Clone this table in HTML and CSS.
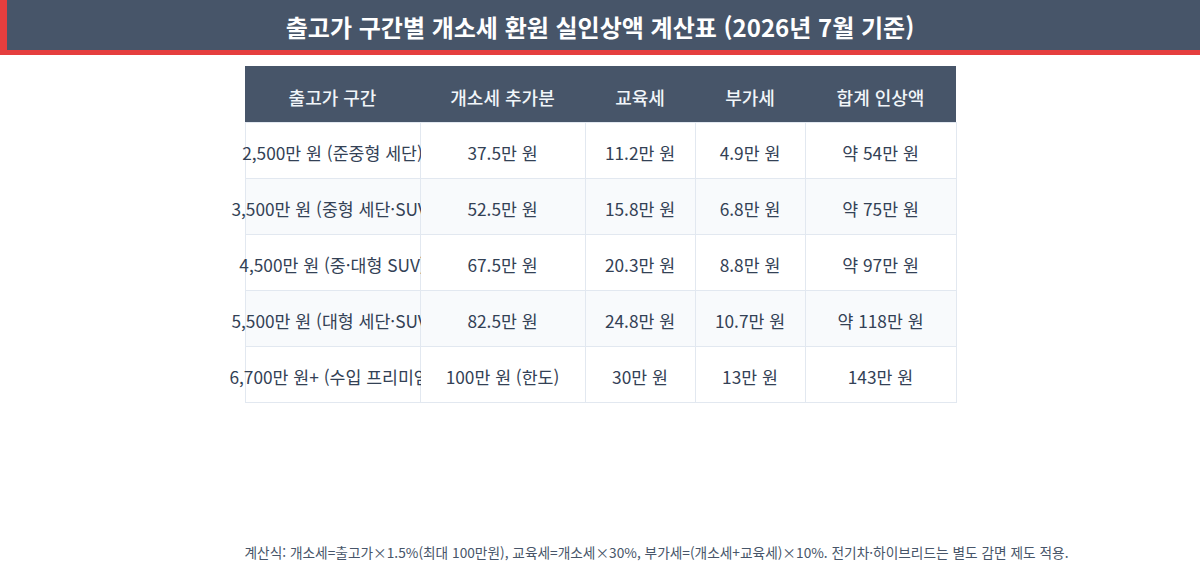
FILE: index.html
```html
<!DOCTYPE html>
<html lang="ko">
<head>
<meta charset="utf-8">
<link rel="stylesheet" href="styles.css">
</head>
<body>
<header class="title-bar">
  <h1 class="title">출고가 구간별 개소세 환원 실인상액 계산표 (2026년 7월 기준)</h1>
</header>
<main class="content">
  <table class="calc-table">
    <colgroup>
      <col class="c1"><col class="c2"><col class="c3"><col class="c4"><col class="c5">
    </colgroup>
    <thead>
      <tr>
        <th>출고가 구간</th><th>개소세 추가분</th><th>교육세</th><th>부가세</th><th>합계 인상액</th>
      </tr>
    </thead>
    <tbody>
      <tr>
        <td><div class="cell">2,500만 원 (준중형 세단)</div></td><td><div class="cell">37.5만 원</div></td><td><div class="cell">11.2만 원</div></td><td><div class="cell">4.9만 원</div></td><td><div class="cell">약 54만 원</div></td>
      </tr>
      <tr>
        <td><div class="cell">3,500만 원 (중형 세단·SUV)</div></td><td><div class="cell">52.5만 원</div></td><td><div class="cell">15.8만 원</div></td><td><div class="cell">6.8만 원</div></td><td><div class="cell">약 75만 원</div></td>
      </tr>
      <tr>
        <td><div class="cell">4,500만 원 (중·대형 SUV)</div></td><td><div class="cell">67.5만 원</div></td><td><div class="cell">20.3만 원</div></td><td><div class="cell">8.8만 원</div></td><td><div class="cell">약 97만 원</div></td>
      </tr>
      <tr>
        <td><div class="cell">5,500만 원 (대형 세단·SUV)</div></td><td><div class="cell">82.5만 원</div></td><td><div class="cell">24.8만 원</div></td><td><div class="cell">10.7만 원</div></td><td><div class="cell">약 118만 원</div></td>
      </tr>
      <tr>
        <td><div class="cell">6,700만 원+ (수입 프리미엄)</div></td><td><div class="cell">100만 원 (한도)</div></td><td><div class="cell">30만 원</div></td><td><div class="cell">13만 원</div></td><td><div class="cell">143만 원</div></td>
      </tr>
    </tbody>
  </table>
  <p class="note">계산식: 개소세=출고가×1.5%(최대 100만원), 교육세=개소세×30%, 부가세=(개소세+교육세)×10%. 전기차·하이브리드는 별도 감면 제도 적용.</p>
</main>
</body>
</html>
```

FILE: styles.css
```css
html, body {
  margin: 0;
  padding: 0;
  background: #ffffff;
}

body {
  width: 1200px;
  height: 570px;
  overflow: hidden;
  font-family: "Noto Sans CJK KR", "Noto Sans", sans-serif;
  color: #334155;
}

.title-bar {
  box-sizing: border-box;
  height: 55px;
  padding-top: 5px;
  background: #475569;
  box-shadow: inset 7px 0 0 #e53e3e;
  border-bottom: 5px solid #e53e3e;
  display: flex;
  align-items: center;
  justify-content: center;
}

.title {
  margin: 0;
  font-size: 24px;
  font-weight: 700;
  color: #ffffff;
  line-height: 1.2;
}

.content {
  width: 711px;
  margin: 11px auto 0;
}

.calc-table {
  width: 711px;
  table-layout: fixed;
  border-collapse: collapse;
}

.c1 { width: 175px; }
.c2 { width: 165px; }
.c3 { width: 110px; }
.c4 { width: 110px; }
.c5 { width: 151px; }

.calc-table th {
  box-sizing: border-box;
  height: 56px;
  padding: 6px 0 0;
  background: #475569;
  color: #f1f5f9;
  font-size: 18px;
  font-weight: 500;
  text-align: center;
}

.calc-table td {
  position: relative;
  height: 55px;
  padding: 0;
  border: 1px solid #e2e8f0;
  background: #ffffff;
  font-size: 17.3px;
  color: #334155;
}

.calc-table tbody tr:nth-child(even) td {
  background: #f8fafc;
}

.cell {
  display: flex;
  justify-content: center;
  white-space: nowrap;
  padding-top: 4px;
}

.note {
  margin: 139px 0 0;
  white-space: nowrap;
  font-size: 13.7px;
  color: #475569;
  line-height: 20px;
}
```
